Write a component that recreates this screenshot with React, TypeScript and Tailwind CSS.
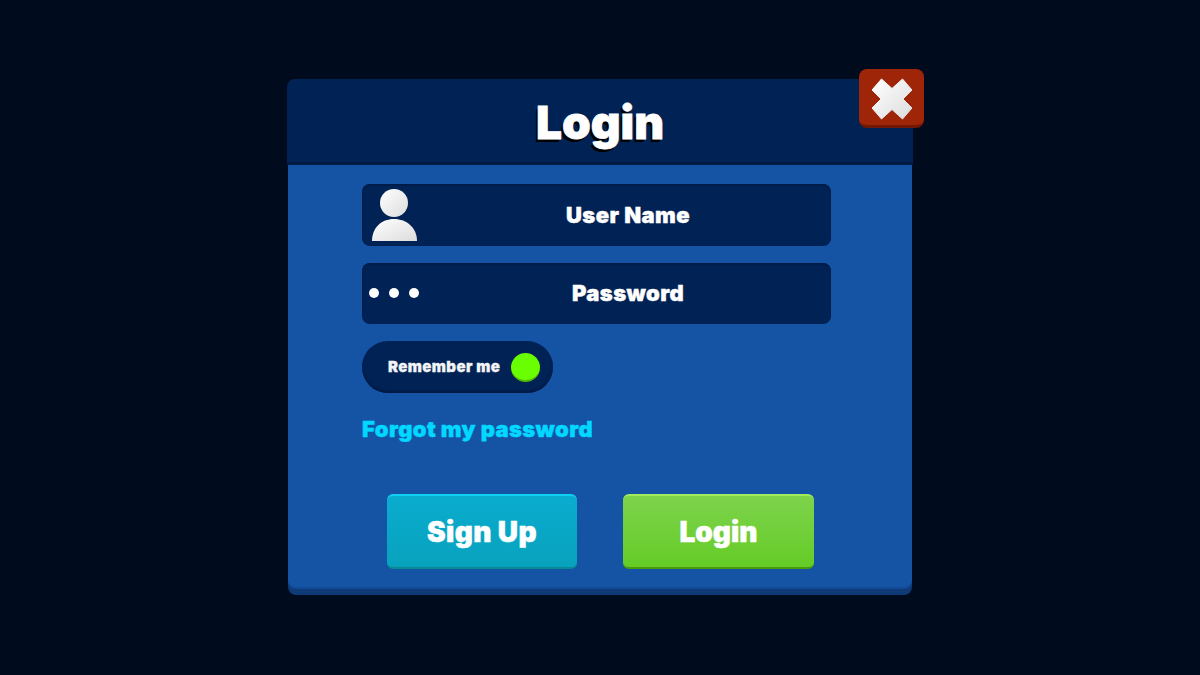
import React from 'react';

const font = "font-['Inter','Liberation_Sans',sans-serif] font-black";

const UserIcon = () => (
  <svg width="46" height="52" viewBox="0 0 46 52">
    <defs>
      <linearGradient id="userFill" x1="0" y1="0" x2="1" y2="1">
        <stop offset="0" stopColor="#ffffff" />
        <stop offset="1" stopColor="#dcdcdc" />
      </linearGradient>
    </defs>
    <circle cx="22" cy="14" r="14" fill="url(#userFill)" />
    <path d="M0 52 C0 39 9 30 22 30 C35 30 45 39 45 52 Z" fill="url(#userFill)" />
  </svg>
);

const CloseIcon = () => (
  <svg width="42" height="42" viewBox="0 0 42 42">
    <defs>
      <linearGradient id="closeFill" x1="0" y1="0" x2="1" y2="1">
        <stop offset="0" stopColor="#ffffff" />
        <stop offset="1" stopColor="#dcdcdc" />
      </linearGradient>
    </defs>
    <path
      d="M10.5 1 L21 10.5 L31.5 1 L41 12 L32 21 L41 30 L31.5 41 L21 31.5 L10.5 41 L1 30 L10 21 L1 12 Z"
      fill="url(#closeFill)"
      stroke="url(#closeFill)"
      strokeWidth="1"
      strokeLinejoin="round"
    />
  </svg>
);

const Field = ({ icon, label, height }: { icon: React.ReactNode; label: string; height: string }) => (
  <div className={`${height} relative flex w-[469px] items-center justify-center rounded-lg bg-[#012254] shadow-[inset_0_1px_2px_#001a42]`}>
    {icon}
    <span className={`${font} pl-[63px] text-[22px] tracking-[0.4px] text-white [-webkit-text-stroke:0.4px_white]`}>{label}</span>
  </div>
);

export default function App() {
  return (
    <div className="flex h-[675px] w-[1200px] items-start justify-center bg-[#000c1e] pt-[79px]">
      <div className="relative flex h-[516px] w-[626px] flex-col">
        <div className="flex h-[86px] items-center justify-center rounded-t-lg border-b-[3px] border-[#001a42] bg-[#012254] pt-[3px]">
          <h1 className={`${font} text-[46px] text-white [-webkit-text-stroke:0.8px_white] [text-shadow:-2px_3px_0_#000]`}>Login</h1>
        </div>

        <button className="absolute left-[572px] top-[-10px] flex h-[59px] w-[65px] items-center justify-center rounded-lg border-b-[3px] border-[#721806] bg-[#9f2509] pt-[3px]">
          <CloseIcon />
        </button>

        <div className="mx-[1px] flex h-[424px] flex-col rounded-b-lg border-b-2 border-[#114a96] bg-[#1553a5] pl-[74px] pt-[19px] shadow-[0_6px_0_#0f3a78]">
          <div className="flex flex-col gap-[17px]">
            <Field
              height="h-[62px]"
              label="User Name"
              icon={
                <div className="absolute bottom-[5px] left-[10px] flex">
                  <UserIcon />
                </div>
              }
            />
            <Field
              height="h-[61px]"
              label="Password"
              icon={
                <div className="absolute left-[7px] top-[25px] flex gap-[10px]">
                  <span className="h-[10px] w-[10px] rounded-full bg-white" />
                  <span className="h-[10px] w-[10px] rounded-full bg-white" />
                  <span className="h-[10px] w-[10px] rounded-full bg-white" />
                </div>
              }
            />
          </div>

          <div className="mt-[17px] flex h-[52px] w-[191px] items-center justify-between rounded-full bg-[#012254] pl-[26px] pr-[13px] shadow-[inset_0_-2px_2px_#001a42]">
            <span className={`${font} text-[15px] tracking-[0.4px] text-[#f2f4f7] [-webkit-text-stroke:0.3px_#f2f4f7]`}>Remember me</span>
            <span className="h-[29px] w-[29px] rounded-full border-b-2 border-[#55b800] bg-[#6aff00]" />
          </div>

          <a className={`${font} mt-[22px] text-[22px] leading-[28px] tracking-[0.38px] text-[#00d8ff] [-webkit-text-stroke:0.4px_#00d8ff]`}>Forgot my password</a>

          <div className="mt-[51px] flex gap-[46px] pl-[25px]">
            <button className={`${font} h-[75px] w-[190px] rounded-md border-t-2 border-b-2 border-t-[#0fd0f0] border-b-[#078a94] bg-gradient-to-b from-[#0aaccf] to-[#08a2bd] text-[28px] tracking-[0.4px] text-white [-webkit-text-stroke:0.5px_white]`}>
              Sign Up
            </button>
            <button className={`${font} h-[75px] w-[191px] rounded-md border-t-2 border-b-2 border-t-[#a0ea5c] border-b-[#4a9a0a] bg-gradient-to-b from-[#7dd34a] to-[#65cc25] text-[28px] text-white [-webkit-text-stroke:0.5px_white]`}>
              Login
            </button>
          </div>
        </div>
      </div>
    </div>
  );
}
